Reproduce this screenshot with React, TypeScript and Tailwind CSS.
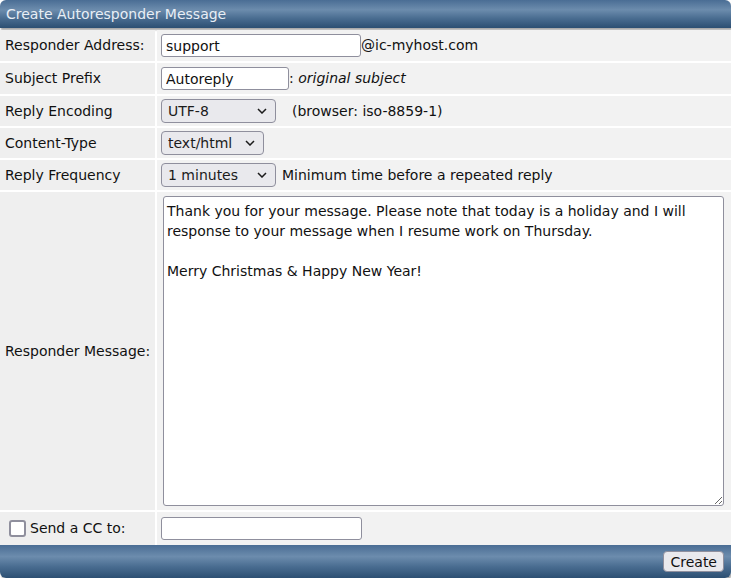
import { useState } from "react";

const font = { fontFamily: '"DejaVu Sans", Verdana, sans-serif' };

const Chevron = () => (
  <svg
    width="10"
    height="6"
    viewBox="0 0 10 6"
    className="pointer-events-none absolute right-[9px] top-1/2 -translate-y-1/2"
  >
    <path d="M1 1l4 4 4-4" fill="none" stroke="#1b1b1b" strokeWidth="1.5" />
  </svg>
);

const Select = ({ value, width, options }: { value: string; width: string; options: string[] }) => (
  <div className={`relative ${width}`}>
    <select
      defaultValue={value}
      className="h-[24px] w-full appearance-none rounded-[4px] border border-[#8f8f9d] bg-[#e9e9ed] pl-[6px] text-[14px] text-[#1b1b1b] outline-none"
    >
      {options.map((o) => (
        <option key={o}>{o}</option>
      ))}
    </select>
    <Chevron />
  </div>
);

const Row = ({ label, children, className = "h-[31px]" }: { label: React.ReactNode; children: React.ReactNode; className?: string }) => (
  <div className={`grid grid-cols-[155px_1fr] gap-x-[2px] ${className}`}>
    <div className="flex items-center bg-[#efefef] pl-[5px]">{label}</div>
    <div className="flex items-center bg-[#f2f2f2] pl-[4px]">{children}</div>
  </div>
);

const inputCls =
  "h-[23px] rounded-[3px] border border-[#8f8f9d] bg-white px-[4px] text-[14px] text-[#111] outline-none";

export default function App() {
  const [cc, setCc] = useState(false);
  return (
    <div className="h-[578px] w-[731px] overflow-hidden bg-white text-[14px] text-[#111]" style={font}>
      <div className="flex h-[28px] items-center rounded-t-[6px] bg-[linear-gradient(#4a6d94_0%,#6c8cad_35%,#4a6d91_65%,#2c4f72_100%)] pl-[6px] text-[#e8eef5] shadow-[1px_2px_2px_rgba(0,0,0,0.35)]">
        Create Autoresponder Message
      </div>
      <div className="mt-[2px] flex flex-col gap-[2px]">
        <Row label="Responder Address:">
          <input className={`${inputCls} w-[200px]`} defaultValue="support" />
          <span>@ic-myhost.com</span>
        </Row>
        <Row label="Subject Prefix">
          <input className={`${inputCls} w-[128px]`} defaultValue="Autoreply" />
          <span>
            : <i>original subject</i>
          </span>
        </Row>
        <Row label="Reply Encoding" className="h-[30px]">
          <Select value="UTF-8" width="w-[115px]" options={["UTF-8", "ISO-8859-1"]} />
          <span className="ml-[16px]">(browser: iso-8859-1)</span>
        </Row>
        <Row label="Content-Type" className="h-[30px]">
          <Select value="text/html" width="w-[103px]" options={["text/html", "text/plain"]} />
        </Row>
        <Row label="Reply Frequency" className="h-[30px]">
          <Select value="1 minutes" width="w-[115px]" options={["1 minutes", "5 minutes", "1 hours"]} />
          <span className="ml-[6px]">Minimum time before a repeated reply</span>
        </Row>
        <div className="grid h-[318px] grid-cols-[155px_1fr] gap-x-[2px]">
          <div className="flex items-center bg-[#efefef] pl-[5px]">Responder Message:</div>
          <div className="flex bg-[#f2f2f2] pb-[4px] pl-[6px] pr-[7px] pt-[4px]">
            <textarea
              className="h-full w-full rounded-[3px] border border-[#8f8f9d] bg-white px-[3px] py-[4px] text-[14px] leading-[20px] text-[#111] outline-none"
              defaultValue={
                "Thank you for your message. Please note that today is a holiday and I will response to your message when I resume work on Thursday.\n\nMerry Christmas & Happy New Year!"
              }
            />
          </div>
        </div>
        <Row label={
          <label className="flex items-center gap-[4px]">
            <input
              type="checkbox"
              checked={cc}
              onChange={(e) => setCc(e.target.checked)}
              className="ml-[4px] h-[17px] w-[17px] appearance-none rounded-[3px] border-2 border-[#8f8f9d] bg-white checked:bg-[#0060df]"
            />
            Send a CC to:
          </label>
        } className="h-[33px]">
          <input className={`${inputCls} w-[201px]`} />
        </Row>
      </div>
      <div className="flex h-[33px] items-center justify-end rounded-b-[6px] bg-[linear-gradient(#4a6d94_0%,#6c8cad_35%,#4a6d91_65%,#2c4f72_100%)] pr-[7px] shadow-[1px_2px_2px_rgba(0,0,0,0.35)]">
        <button className="h-[21px] rounded-[4px] border border-[#8f8f9d] bg-[#e9e9ed] px-[6px] text-[14px] leading-none text-[#111]">
          Create
        </button>
      </div>
    </div>
  );
}
